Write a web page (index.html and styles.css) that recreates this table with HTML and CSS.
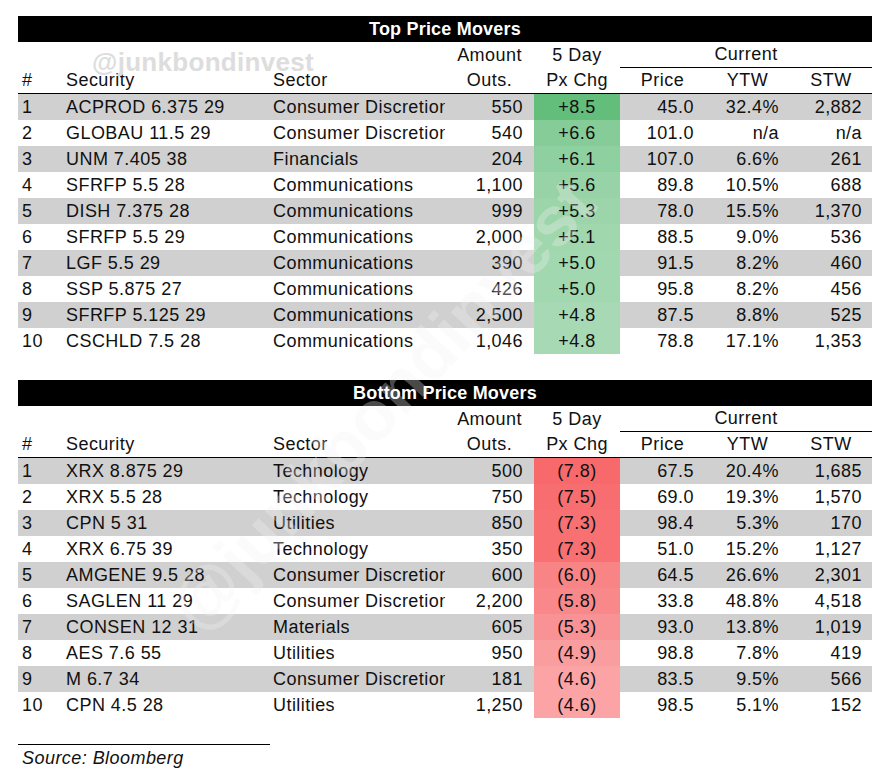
FILE: index.html
```html
<!DOCTYPE html>
<html>
<head>
<meta charset="utf-8">
<link rel="stylesheet" href="styles.css">
</head>
<body>
<div class="page">
  <section class="movers">
    <div class="title">Top Price Movers</div>
    <div class="row head1">
      <div class="c4 hc">Amount</div>
      <div class="c5 hc">5 Day</div>
      <div class="current hc">Current</div>
    </div>
    <div class="row head2">
      <div class="l">#</div><div class="l">Security</div><div class="l">Sector</div>
      <div class="hc">Outs.</div><div class="hc">Px Chg</div><div class="hc">Price</div><div class="hc">YTW</div><div class="hc">STW</div>
    </div>
    <div class="row data"><div class="l">1</div><div class="l">ACPROD 6.375 29</div><div class="l sec">Consumer Discretionary</div><div class="r">550</div><div class="chg" style="background:#63be7b">+8.5</div><div class="r">45.0</div><div class="r">32.4%</div><div class="r s">2,882</div></div>
    <div class="row data"><div class="l">2</div><div class="l">GLOBAU 11.5 29</div><div class="l sec">Consumer Discretionary</div><div class="r">540</div><div class="chg" style="background:#86cc99">+6.6</div><div class="r">101.0</div><div class="r">n/a</div><div class="r s">n/a</div></div>
    <div class="row data"><div class="l">3</div><div class="l">UNM 7.405 38</div><div class="l sec">Financials</div><div class="r">204</div><div class="chg" style="background:#8fd0a0">+6.1</div><div class="r">107.0</div><div class="r">6.6%</div><div class="r s">261</div></div>
    <div class="row data"><div class="l">4</div><div class="l">SFRFP 5.5 28</div><div class="l sec">Communications</div><div class="r">1,100</div><div class="chg" style="background:#98d3a7">+5.6</div><div class="r">89.8</div><div class="r">10.5%</div><div class="r s">688</div></div>
    <div class="row data"><div class="l">5</div><div class="l">DISH 7.375 28</div><div class="l sec">Communications</div><div class="r">999</div><div class="chg" style="background:#9cd5aa">+5.3</div><div class="r">78.0</div><div class="r">15.5%</div><div class="r s">1,370</div></div>
    <div class="row data"><div class="l">6</div><div class="l">SFRFP 5.5 29</div><div class="l sec">Communications</div><div class="r">2,000</div><div class="chg" style="background:#a0d7ad">+5.1</div><div class="r">88.5</div><div class="r">9.0%</div><div class="r s">536</div></div>
    <div class="row data"><div class="l">7</div><div class="l">LGF 5.5 29</div><div class="l sec">Communications</div><div class="r">390</div><div class="chg" style="background:#a2d8af">+5.0</div><div class="r">91.5</div><div class="r">8.2%</div><div class="r s">460</div></div>
    <div class="row data"><div class="l">8</div><div class="l">SSP 5.875 27</div><div class="l sec">Communications</div><div class="r">426</div><div class="chg" style="background:#a2d8af">+5.0</div><div class="r">95.8</div><div class="r">8.2%</div><div class="r s">456</div></div>
    <div class="row data"><div class="l">9</div><div class="l">SFRFP 5.125 29</div><div class="l sec">Communications</div><div class="r">2,500</div><div class="chg" style="background:#a7dab4">+4.8</div><div class="r">87.5</div><div class="r">8.8%</div><div class="r s">525</div></div>
    <div class="row data"><div class="l">10</div><div class="l">CSCHLD 7.5 28</div><div class="l sec">Communications</div><div class="r">1,046</div><div class="chg" style="background:#a7dab4">+4.8</div><div class="r">78.8</div><div class="r">17.1%</div><div class="r s">1,353</div></div>
  </section>

  <section class="movers">
    <div class="title">Bottom Price Movers</div>
    <div class="row head1">
      <div class="c4 hc">Amount</div>
      <div class="c5 hc">5 Day</div>
      <div class="current hc">Current</div>
    </div>
    <div class="row head2">
      <div class="l">#</div><div class="l">Security</div><div class="l">Sector</div>
      <div class="hc">Outs.</div><div class="hc">Px Chg</div><div class="hc">Price</div><div class="hc">YTW</div><div class="hc">STW</div>
    </div>
    <div class="row data"><div class="l">1</div><div class="l">XRX 8.875 29</div><div class="l sec">Technology</div><div class="r">500</div><div class="chg" style="background:#f8696b">(7.8)</div><div class="r">67.5</div><div class="r">20.4%</div><div class="r s">1,685</div></div>
    <div class="row data"><div class="l">2</div><div class="l">XRX 5.5 28</div><div class="l sec">Technology</div><div class="r">750</div><div class="chg" style="background:#f86d6f">(7.5)</div><div class="r">69.0</div><div class="r">19.3%</div><div class="r s">1,570</div></div>
    <div class="row data"><div class="l">3</div><div class="l">CPN 5 31</div><div class="l sec">Utilities</div><div class="r">850</div><div class="chg" style="background:#f87072">(7.3)</div><div class="r">98.4</div><div class="r">5.3%</div><div class="r s">170</div></div>
    <div class="row data"><div class="l">4</div><div class="l">XRX 6.75 39</div><div class="l sec">Technology</div><div class="r">350</div><div class="chg" style="background:#f87072">(7.3)</div><div class="r">51.0</div><div class="r">15.2%</div><div class="r s">1,127</div></div>
    <div class="row data"><div class="l">5</div><div class="l">AMGENE 9.5 28</div><div class="l sec">Consumer Discretionary</div><div class="r">600</div><div class="chg" style="background:#f98486">(6.0)</div><div class="r">64.5</div><div class="r">26.6%</div><div class="r s">2,301</div></div>
    <div class="row data"><div class="l">6</div><div class="l">SAGLEN 11 29</div><div class="l sec">Consumer Discretionary</div><div class="r">2,200</div><div class="chg" style="background:#f9888a">(5.8)</div><div class="r">33.8</div><div class="r">48.8%</div><div class="r s">4,518</div></div>
    <div class="row data"><div class="l">7</div><div class="l">CONSEN 12 31</div><div class="l sec">Materials</div><div class="r">605</div><div class="chg" style="background:#f99294">(5.3)</div><div class="r">93.0</div><div class="r">13.8%</div><div class="r s">1,019</div></div>
    <div class="row data"><div class="l">8</div><div class="l">AES 7.6 55</div><div class="l sec">Utilities</div><div class="r">950</div><div class="chg" style="background:#fa9d9f">(4.9)</div><div class="r">98.8</div><div class="r">7.8%</div><div class="r s">419</div></div>
    <div class="row data"><div class="l">9</div><div class="l">M 6.7 34</div><div class="l sec">Consumer Discretionary</div><div class="r">181</div><div class="chg" style="background:#fba3a5">(4.6)</div><div class="r">83.5</div><div class="r">9.5%</div><div class="r s">566</div></div>
    <div class="row data"><div class="l">10</div><div class="l">CPN 4.5 28</div><div class="l sec">Utilities</div><div class="r">1,250</div><div class="chg" style="background:#fba3a5">(4.6)</div><div class="r">98.5</div><div class="r">5.1%</div><div class="r s">152</div></div>
  </section>

  <footer class="source">Source: Bloomberg</footer>

  <div class="wm-top">@junkbondinvest</div>
  <div class="wm-diag">@junkbondinvest</div>
</div>
</body>
</html>
```

FILE: styles.css
```css
html, body {
  margin: 0;
  padding: 0;
  background: #ffffff;
}

.page {
  position: relative;
  width: 895px;
  height: 778px;
  overflow: hidden;
  padding: 16px 0 0 18px;
  box-sizing: border-box;
  font-family: "Liberation Sans", Arial, sans-serif;
  font-size: 18px;
  letter-spacing: 0.45px;
  color: #111;
}

.movers {
  width: 854px;
  margin-bottom: 26px;
  display: flex;
  flex-direction: column;
}

.title {
  height: 26px;
  line-height: 27px;
  background: #000;
  color: #fff;
  font-weight: bold;
  text-align: center;
  letter-spacing: 0.2px;
}

.row {
  display: grid;
  grid-template-columns: 44px 207px 176px 89px 86px 85px 85px 82px;
  height: 26px;
  line-height: 26px;
  box-sizing: border-box;
}

.head1 .c4 { grid-column: 4; }
.head1 .c5 { grid-column: 5; }
.head1 .current {
  grid-column: 6 / 9;
  border-bottom: 1px solid #000;
  box-sizing: border-box;
  line-height: 25px;
}

.head2 {
  border-bottom: 1px solid #000;
  line-height: 25px;
}

.hc { text-align: center; white-space: nowrap; }
.l { padding-left: 4px; white-space: nowrap; overflow: hidden; }
.r { text-align: right; padding-right: 11px; white-space: nowrap; }
.r.s { padding-right: 10px; }
.sec { text-overflow: clip; }
.chg { text-align: center; white-space: nowrap; }

.data:nth-of-type(even) { background: #d0d0d0; }
.data:nth-of-type(odd) { background: #ffffff; }

.source {
  width: 252px;
  border-top: 1px solid #000;
  padding-left: 4px;
  box-sizing: border-box;
  font-style: italic;
  line-height: 26px;
}

.wm-top {
  position: absolute;
  left: 92px;
  top: 49px;
  font-size: 26px;
  line-height: 26px;
  font-weight: bold;
  letter-spacing: 0.3px;
  color: #dddddd;
  pointer-events: none;
}

.wm-diag {
  position: absolute;
  left: 382px;
  top: 405px;
  transform: translate(-50%, -50%) rotate(-47deg);
  font-size: 70px;
  line-height: 70px;
  font-weight: bold;
  letter-spacing: 0;
  color: rgba(242, 242, 242, 0.3);
  white-space: nowrap;
  pointer-events: none;
}
```
